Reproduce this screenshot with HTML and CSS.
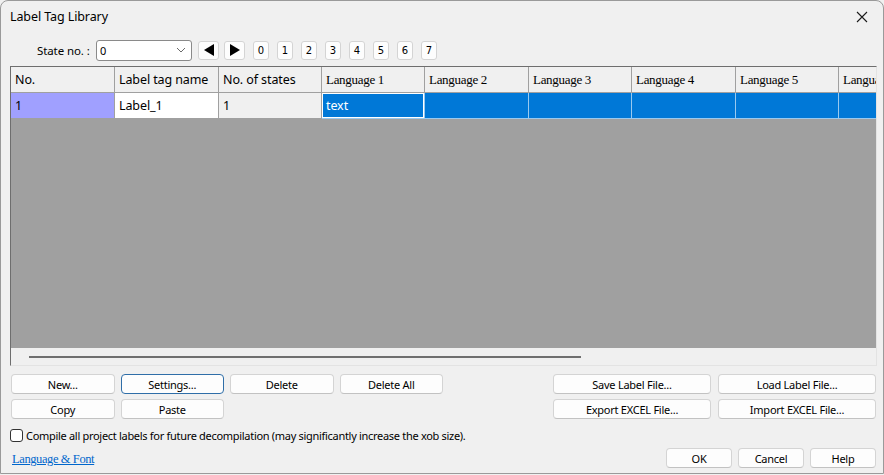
FILE: index.html
```
<!DOCTYPE html>
<html lang="en">
<head>
    <meta charset="UTF-8">
    <title>Label Tag Library</title>
    <link rel="stylesheet" href="styles.css">
</head>
<body>
    <div class="window">
        <div class="titlebar">
            <span class="title">Label Tag Library</span>
            <svg class="close" width="12" height="12" viewBox="0 0 12 12">
                <path d="M1 1 L11 11 M11 1 L1 11" stroke="#1a1a1a" stroke-width="1.1" fill="none"/>
            </svg>
        </div>

        <div class="state-row">
            <span class="state-label">State no. :</span>
            <div class="combo">
                <span>0</span>
                <svg width="10" height="6" viewBox="0 0 10 6">
                    <path d="M1 1 L5 5 L9 1" stroke="#6a6a6a" stroke-width="1" fill="none"/>
                </svg>
            </div>
            <div class="nav-btns">
                <button class="nav-btn">
                    <svg width="12" height="12" viewBox="0 0 12 12"><path d="M11 0 L11 12 L1 6 Z" fill="#000"/></svg>
                </button>
                <button class="nav-btn">
                    <svg width="12" height="12" viewBox="0 0 12 12"><path d="M1 0 L1 12 L11 6 Z" fill="#000"/></svg>
                </button>
            </div>
            <div class="num-btns">
                <button class="num-btn">0</button>
                <button class="num-btn">1</button>
                <button class="num-btn">2</button>
                <button class="num-btn">3</button>
                <button class="num-btn">4</button>
                <button class="num-btn">5</button>
                <button class="num-btn">6</button>
                <button class="num-btn">7</button>
            </div>
        </div>

        <div class="grid">
            <div class="row head">
                <div class="cell">No.</div>
                <div class="cell">Label tag name</div>
                <div class="cell">No. of states</div>
                <div class="cell lang">Language 1</div>
                <div class="cell lang">Language 2</div>
                <div class="cell lang">Language 3</div>
                <div class="cell lang">Language 4</div>
                <div class="cell lang">Language 5</div>
                <div class="cell lang last">Language 6</div>
            </div>
            <div class="row data">
                <div class="cell num">1</div>
                <div class="cell name">Label_1</div>
                <div class="cell states">1</div>
                <div class="cell sel focus">text</div>
                <div class="cell sel"></div>
                <div class="cell sel"></div>
                <div class="cell sel"></div>
                <div class="cell sel"></div>
                <div class="cell sel last"></div>
            </div>
            <div class="empty"></div>
            <div class="hscroll"><div class="thumb"></div></div>
        </div>

        <div class="actions">
            <div class="btn-grid left">
                <button class="btn">New...</button>
                <button class="btn default">Settings...</button>
                <button class="btn">Delete</button>
                <button class="btn">Delete All</button>
                <button class="btn">Copy</button>
                <button class="btn">Paste</button>
            </div>
            <div class="btn-grid right">
                <button class="btn">Save Label File...</button>
                <button class="btn">Load Label File...</button>
                <button class="btn">Export EXCEL File...</button>
                <button class="btn">Import EXCEL File...</button>
            </div>
        </div>

        <label class="check-row">
            <span class="checkbox"></span>
            Compile all project labels for future decompilation (may significantly increase the xob size).
        </label>

        <div class="footer">
            <a class="link" href="#">Language &amp; Font</a>
            <div class="dlg-btns">
                <button class="btn small">OK</button>
                <button class="btn small">Cancel</button>
                <button class="btn small">Help</button>
            </div>
        </div>
    </div>
</body>
</html>
```

FILE: styles.css
```
body{
    margin: 0;
    background-color: #f0f0f0;
    font: 11px "Noto Sans", sans-serif;
    letter-spacing: -0.3px;
    color: #000;
}
.window{
    box-sizing: border-box;
    width: 884px;
    height: 474px;
    border: 1px solid #9a9a9a;
    border-radius: 8px 8px 0 0;
    background-color: #f0f0f0;
}
.titlebar{
    height: 31px;
    display: flex;
    align-items: center;
    justify-content: space-between;
    padding: 0 15px 0 9px;
}
.title{
    font-size: 12.5px;
    letter-spacing: -0.1px;
}
.state-row{
    display: flex;
    align-items: center;
    margin-top: 8px;
    padding-left: 36px;
    height: 20px;
}
.state-label{
    width: 59px;
    font-size: 11.5px;
    letter-spacing: -0.1px;
}
.combo{
    box-sizing: border-box;
    width: 96px;
    height: 21px;
    background-color: #fff;
    border: 1px solid #8a8a8a;
    border-radius: 3px;
    display: flex;
    align-items: center;
    justify-content: space-between;
    padding: 0 5px 0 3px;
}
button{
    font: 11px "Noto Sans", sans-serif;
    letter-spacing: -0.25px;
    color: #000;
    padding: 0;
    margin: 0;
}
.nav-btns{
    display: flex;
    gap: 5px;
    margin-left: 6px;
}
.nav-btn{
    box-sizing: border-box;
    width: 21px;
    height: 19px;
    background-color: #fdfdfd;
    border: 1px solid #d4d4d4;
    border-radius: 3px;
    display: flex;
    align-items: center;
    justify-content: center;
}
.num-btns{
    display: flex;
    gap: 8px;
    margin-left: 8px;
}
.num-btn{
    box-sizing: border-box;
    width: 16px;
    height: 19px;
    background-color: #fdfdfd;
    border: 1px solid #d4d4d4;
    border-radius: 3px;
    font: 10px "DejaVu Sans", sans-serif;
    letter-spacing: 0;
}
.grid{
    box-sizing: border-box;
    height: 300px;
    margin: 6px 6px 0 9px;
    border-top: 1px solid #6e6e6e;
    border-left: 1px solid #6e6e6e;
    border-right: 1px solid #e3e3e3;
    border-bottom: 1px solid #e3e3e3;
    display: flex;
    flex-direction: column;
    overflow: hidden;
}
.row{
    display: grid;
    grid-template-columns: 104px 104px 103px 103px 104px 103px 104px 103px 103px;
    height: 26px;
    flex: none;
}
.cell{
    box-sizing: border-box;
    border-right: 1px solid #a0a0a0;
    border-bottom: 1px solid #a0a0a0;
    padding: 0 4px;
    line-height: 25px;
    white-space: nowrap;
    overflow: hidden;
    font-size: 12.5px;
    letter-spacing: -0.1px;
}
.head .cell{
    background-color: #f0f0f0;
}
.head .lang{
    font: 13px/25px "Liberation Serif", serif;
    letter-spacing: -0.3px;
}
.num{
    background-color: #a0a0ff;
}
.name{
    background-color: #fff;
}
.states{
    background-color: #f0f0f0;
}
.sel{
    background-color: #0078d7;
    color: #fff;
    border-right-color: #99c9ef;
    border-bottom-color: #99c9ef;
}
.focus{
    box-shadow: inset 0 0 0 1px #fff;
}
.empty{
    flex: 1;
    background-color: #a0a0a0;
}
.hscroll{
    height: 17px;
    flex: none;
    background-color: #f0f0f0;
    display: flex;
    align-items: center;
}
.thumb{
    width: 552px;
    height: 2px;
    margin-left: 18px;
    background-color: #6f6f6f;
}
.actions{
    display: flex;
    justify-content: space-between;
    margin: 8px 7px 0 10px;
}
.btn-grid{
    display: grid;
    gap: 5px 6px;
}
.btn-grid.left{
    grid-template-columns: repeat(4, 103.5px);
}
.btn-grid.right{
    grid-template-columns: repeat(2, 158px);
    gap: 5px 7px;
}
.btn{
    box-sizing: border-box;
    height: 20px;
    background-color: #fdfdfd;
    border: 1px solid #d4d4d4;
    border-bottom-color: #c2c2c2;
    border-radius: 4px;
}
.btn.default{
    border: 1px solid #2f6ea8;
}
.check-row{
    display: flex;
    align-items: center;
    margin: 9px 0 0 9px;
    gap: 3px;
    height: 14px;
}
.checkbox{
    box-sizing: border-box;
    width: 13px;
    height: 13px;
    background-color: #fff;
    border: 1px solid #333;
    border-radius: 3px;
}
.footer{
    display: flex;
    justify-content: space-between;
    align-items: flex-start;
    margin: 6px 7px 0 11px;
}
.link{
    font: 12.5px/20px "Liberation Serif", serif;
    color: #0066cc;
    text-decoration: underline;
    letter-spacing: -0.4px;
    margin-top: 1px;
}
.dlg-btns{
    display: flex;
    gap: 6px;
}
.btn.small{
    width: 66px;
}
```
